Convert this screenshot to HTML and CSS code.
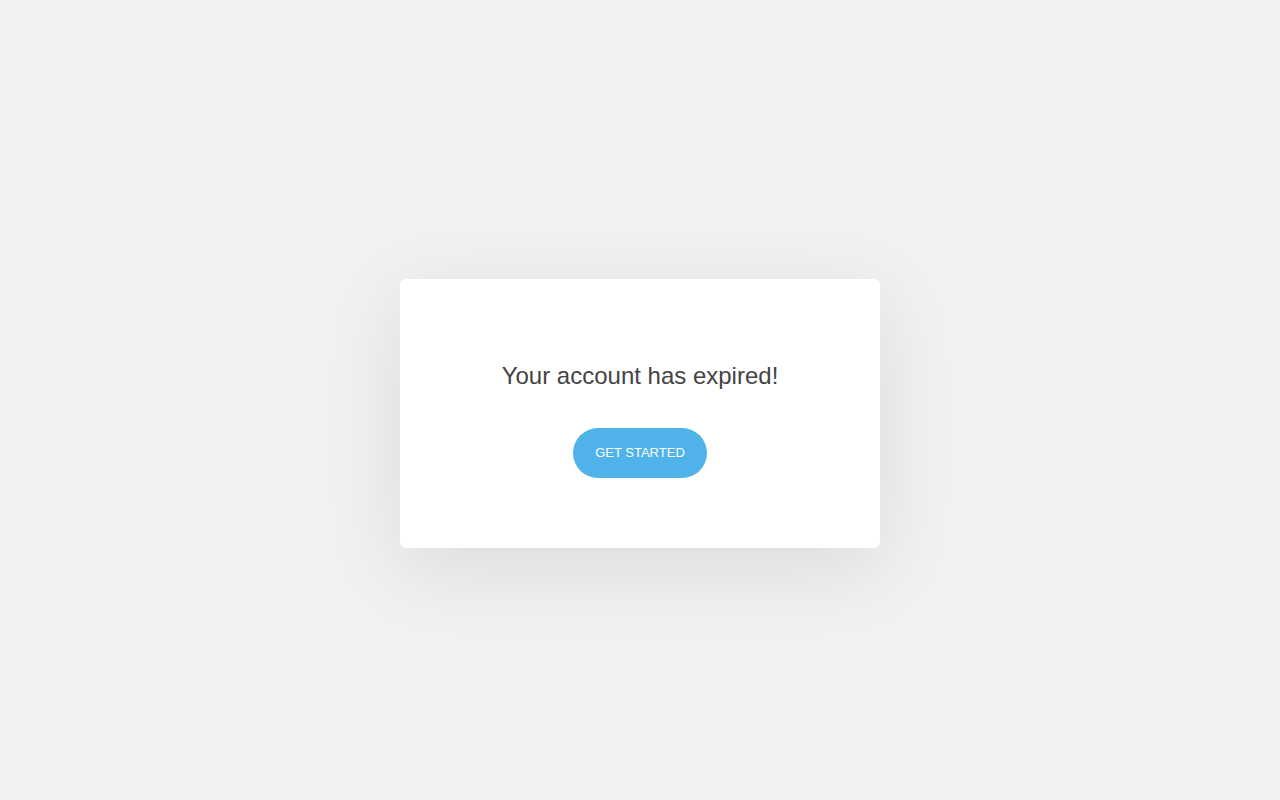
FILE: index.html
```html
<!DOCTYPE html>
<html>
<head>
<meta charset="utf-8">
<link rel="stylesheet" href="styles.css">
</head>
<body>
<div class="page">
  <div class="card">
    <h1 class="title">Your account has expired!</h1>
    <button class="btn">GET STARTED</button>
  </div>
</div>
</body>
</html>
```
FILE: styles.css
```css
html, body {
  margin: 0;
  padding: 0;
  height: 100%;
}
body {
  background: #f1f1f1;
  font-family: "Liberation Sans", Arial, sans-serif;
}
.page {
  height: 100%;
  box-sizing: border-box;
  padding-top: 27px;
  display: flex;
  align-items: center;
  justify-content: center;
}
.card {
  width: 480px;
  height: 269px;
  box-sizing: border-box;
  background: #fff;
  border-radius: 6px;
  box-shadow: 0 20px 80px rgba(0, 0, 0, 0.09);
  display: flex;
  flex-direction: column;
  align-items: center;
  padding-top: 83px;
}
.title {
  margin: 0;
  font-size: 24px;
  font-weight: 400;
  line-height: 28px;
  color: #444;
}
.btn {
  margin-top: 38px;
  height: 50px;
  padding: 0 22px 1px;
  border: none;
  border-radius: 25px;
  background: #4fb3ea;
  color: #fff;
  font-family: "Liberation Sans", Arial, sans-serif;
  font-size: 13px;
}
```
